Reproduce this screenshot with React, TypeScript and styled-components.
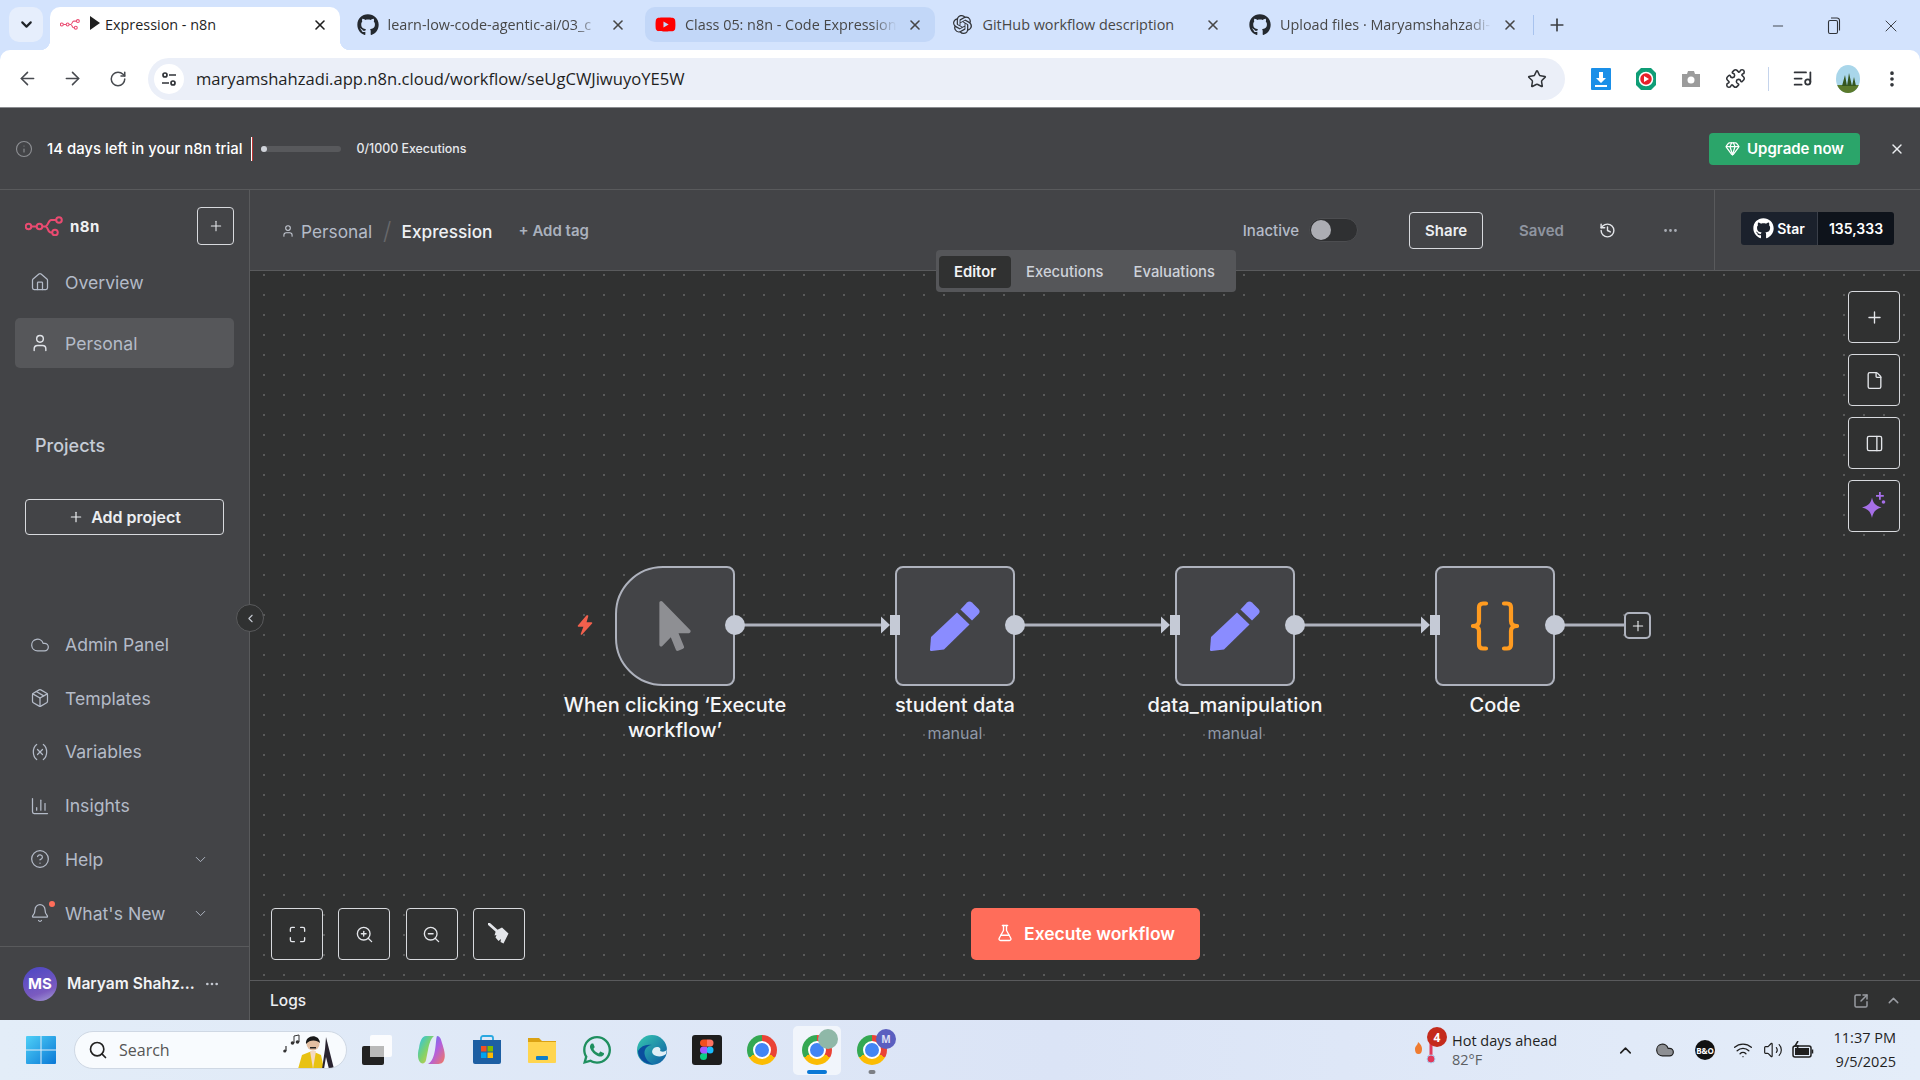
import styled, { createGlobalStyle } from 'styled-components';
import {
  ArrowLeft, ArrowRight, Bell, ChartColumn, ChevronDown, ChevronLeft, ChevronUp, CircleHelp, Cloud, Ellipsis,
  EllipsisVertical, File, FlaskConical, Gem, History, House, Info, ListMusic, Maximize, Minus, Package, PanelRight, Plus,
  Puzzle, RotateCw, Search, Star, SquareArrowOutUpRight, User, Variable, Volume2, Wifi, X, ZoomIn, ZoomOut,
} from 'lucide-react';
import { FaGithub, FaMousePointer, FaWhatsapp, FaYoutube } from 'react-icons/fa';
import { SiOpenai } from 'react-icons/si';

const GlobalStyle = createGlobalStyle`
    html, body {
        margin: 0;
        padding: 0;
        height: 100%;
        overflow: hidden;
        background: #434447;
        font-family: Inter, "Liberation Sans", sans-serif;
    }
    * {
        box-sizing: border-box;
    }
`;

const Screen = styled.div`
    width: 1920px;
    height: 1080px;
    display: flex;
    flex-direction: column;
    overflow: hidden;
`;

/* browser chrome */

const TabStrip = styled.div`
    height: 50px;
    flex: none;
    background: #d3e3fd;
    display: flex;
    align-items: flex-start;
    padding: 7px 0 0 9px;
    font-family: "Open Sans", sans-serif;
    position: relative;
`;

const TabMenu = styled.div`
    width: 34px;
    height: 35px;
    border-radius: 10px;
    background: #e6eefc;
    display: flex;
    align-items: center;
    justify-content: center;
    margin-right: 7px;
    color: #1f2328;
`;

const Tab = styled.div<{ $active?: boolean; $tinted?: boolean; $divider?: boolean }>`
    width: 290px;
    height: ${(p) => (p.$active ? '43px' : '35px')};
    margin-right: 7.5px;
    padding: 0 12px 0 8px;
    border-radius: 10px ${(p) => (p.$active ? '10px 0 0' : '10px 10px 10px')};
    background: ${(p) => (p.$active ? '#fff' : p.$tinted ? '#c2d7f8' : 'transparent')};
    display: flex;
    align-items: center;
    position: relative;
    color: ${(p) => (p.$active ? '#1f1f1f' : '#474747')};

    ${(p) =>
      p.$active &&
      `
        padding-bottom: 8px;
        &::before, &::after {
            content: '';
            position: absolute;
            bottom: 0;
            width: 10px;
            height: 10px;
        }
        &::before {
            left: -10px;
            background: radial-gradient(circle at 0 0, transparent 10px, #fff 10.5px);
        }
        &::after {
            right: -10px;
            background: radial-gradient(circle at 100% 0, transparent 10px, #fff 10.5px);
        }
    `}

    ${(p) =>
      p.$divider &&
      `
        &::after {
            content: '';
            position: absolute;
            right: -4px;
            top: 8px;
            width: 1px;
            height: 20px;
            background: #a8c3ee;
        }
    `}
`;

const TabIcon = styled.span`
    width: 24px;
    height: 24px;
    flex: none;
    display: flex;
    align-items: center;
    justify-content: center;
    margin-right: 8px;
`;

const TabTitle = styled.span<{ $faded?: boolean }>`
    flex: ${(p) => (p.$faded ? 'none' : '1')};
    width: ${(p) => (p.$faded ? '212px' : 'auto')};
    margin-right: auto;
    font-size: 14.4px;
    white-space: nowrap;
    ${(p) => p.$faded && 'mask-image: linear-gradient(90deg, #000 88%, transparent);'}
`;

const PlayMark = styled.span`
    display: inline-block;
    width: 0;
    height: 0;
    border-left: 10px solid #1f1f1f;
    border-top: 7px solid transparent;
    border-bottom: 7px solid transparent;
    margin-right: 5px;
`;

const NewTab = styled.div`
    width: 30px;
    height: 35px;
    color: #3c3f43;
    display: flex;
    align-items: center;
    justify-content: center;
    margin-left: 4px;
`;

const WindowButtons = styled.div`
    position: absolute;
    right: 1px;
    top: 8px;
    height: 35px;
    display: flex;
    color: #303338;
`;

const WindowButton = styled.div`
    width: 56.500px;
    display: flex;
    align-items: center;
    justify-content: center;
`;

const Toolbar = styled.div`
    height: 58px;
    flex: none;
    background: #d3e3fd;
    border-bottom: 1px solid #8a8c90;
`;

const ToolbarInner = styled.div`
    height: 57px;
    background: #fff;
    border-radius: 10px 10px 0 0;
    display: flex;
    align-items: center;
    padding-left: 4px;
    font-family: "Open Sans", sans-serif;
`;

const NavButton = styled.div<{ $w?: number }>`
    width: ${(p) => p.$w ?? 45}px;
    height: 34px;
    flex: none;
    display: flex;
    align-items: center;
    justify-content: center;
    color: #474a4f;
`;

const UrlBar = styled.div`
    width: 1417px;
    height: 42px;
    margin: 0 13px 0 7px;
    border-radius: 21px;
    background: #ebeff8;
    display: flex;
    align-items: center;
    padding: 0 18px 0 6px;
    color: #1f1f1f;
    font-size: 16.6px;
`;

const SiteInfo = styled.div`
    width: 30px;
    height: 30px;
    border-radius: 50%;
    background: #fff;
    margin-right: 12px;
    display: flex;
    align-items: center;
    justify-content: center;
`;

const UrlText = styled.span`
    flex: 1;
`;

const ToolbarDivider = styled.div`
    width: 1px;
    height: 24px;
    background: #c5d4ec;
    margin: 0 10px;
`;

/* trial banner */

const Banner = styled.div`
    height: 82px;
    flex: none;
    background: #434447;
    border-bottom: 1px solid #595a5c;
    display: flex;
    align-items: center;
    padding: 0 15px 0 15px;
    color: #fff;
`;

const BannerText = styled.span`
    font-size: 14.9px;
    font-weight: 500;
    margin-left: 14px;
`;

const BannerDivider = styled.div`
    width: 2px;
    height: 24px;
    margin: 0 8px 0 9px;
    background: linear-gradient(90deg, #fff 50%, #b33 50%);
`;

const ProgressTrack = styled.div`
    width: 80px;
    height: 6px;
    border-radius: 3px;
    background: #58595c;
    margin-right: 15px;
`;

const ProgressDot = styled.div`
    width: 6px;
    height: 6px;
    border-radius: 50%;
    background: #d0d3da;
`;

const ExecutionCount = styled.span`
    font-size: 12.4px;
    font-weight: 500;
    color: #e6e8ec;
    flex: 1;
`;

const UpgradeButton = styled.div`
    width: 151px;
    height: 32px;
    border-radius: 4px;
    background: #2ba56a;
    color: #fff;
    display: flex;
    align-items: center;
    justify-content: center;
    gap: 7px;
    font-size: 15px;
    font-weight: 600;
    margin-right: 29px;
`;

/* app */

const Main = styled.div`
    flex: 1;
    min-height: 0;
    display: flex;
`;

const Sidebar = styled.aside`
    width: 250px;
    flex: none;
    background: #434447;
    border-right: 1px solid #595a5c;
    display: flex;
    flex-direction: column;
    position: relative;
    z-index: 3;
`;

const BrandRow = styled.div`
    height: 67px;
    padding: 5px 15px 0 25px;
    display: flex;
    align-items: center;
    color: #f0f1f3;
    font-weight: 700;
    font-size: 15px;
    letter-spacing: 0.5px;
`;

const BrandName = styled.span`
    margin-left: 7px;
    flex: 1;
`;

const SquareButton = styled.div`
    width: 37px;
    height: 38px;
    border: 1px solid #d8dade;
    border-radius: 4px;
    display: flex;
    align-items: center;
    justify-content: center;
    color: #e6e8ec;
`;

const NavList = styled.nav<{ $gap: number }>`
    display: flex;
    flex-direction: column;
    gap: ${(p) => p.$gap}px;
`;

const NavItem = styled.div<{ $active?: boolean }>`
    height: 50px;
    width: 219px;
    margin-left: 15px;
    padding: 0 25px 0 15px;
    border-radius: 5px;
    background: ${(p) => (p.$active ? '#56575a' : 'transparent')};
    display: flex;
    align-items: center;
    gap: 15px;
    font-size: 17.6px;
    color: #b4bbc8;
    position: relative;
`;

const NavLabel = styled.span`
    flex: 1;
`;

const NotificationDot = styled.span`
    position: absolute;
    left: 34px;
    top: 13px;
    width: 6px;
    height: 6px;
    border-radius: 50%;
    background: #ff6d5a;
`;

const ProjectsTitle = styled.div`
    margin: 66px 0 0 35px;
    height: 24px;
    line-height: 24px;
    font-size: 18px;
    font-weight: 500;
    color: #c6ccd6;
`;

const AddProject = styled.div`
    margin: 41px 0 0 25px;
    width: 199px;
    height: 36px;
    border: 1px solid #d8dade;
    border-radius: 4px;
    display: flex;
    align-items: center;
    justify-content: center;
    gap: 7px;
    color: #eceef1;
    font-size: 16px;
    font-weight: 600;
`;

const SidebarBottom = styled.div`
    margin-top: auto;
`;

const UserRow = styled.div`
    height: 74px;
    margin-top: 8px;
    border-top: 1px solid #595a5c;
    padding: 0 29px 0 23px;
    display: flex;
    align-items: center;
    color: #f2f3f5;
    font-size: 15.6px;
    font-weight: 600;
`;

const Avatar = styled.div`
    width: 34px;
    height: 34px;
    border-radius: 50%;
    flex: none;
    background: linear-gradient(160deg, #4a46c4, #7b5bc0 70%, #a7a0d8);
    color: #fff;
    display: flex;
    align-items: center;
    justify-content: center;
    font-size: 15px;
    font-weight: 700;
    margin-right: 10px;
`;

const UserName = styled.span`
    flex: 1;
    white-space: nowrap;
`;

const CollapseButton = styled.div`
    position: absolute;
    right: -15px;
    top: 414px;
    width: 28px;
    height: 28px;
    border-radius: 50%;
    background: #303131;
    border: 1px solid #595a5c;
    display: flex;
    align-items: center;
    justify-content: center;
    color: #c4c8d0;
`;

const Content = styled.div`
    flex: 1;
    min-width: 0;
    display: flex;
    flex-direction: column;
`;

const Header = styled.header`
    height: 81px;
    flex: none;
    background: #434447;
    border-bottom: 1px solid #595a5c;
    display: flex;
`;

const Breadcrumbs = styled.div`
    flex: 1;
    display: flex;
    align-items: center;
    padding: 0 0 0 31px;
`;

const CrumbIcon = styled.span`
    display: flex;
    color: #c4c9d3;
    margin: 2px 6px 0 0;
`;

const Crumb = styled.span<{ $current?: boolean }>`
    font-size: 17.300px;
    margin-top: 2px;
    font-weight: ${(p) => (p.$current ? 500 : 400)};
    color: ${(p) => (p.$current ? '#eef0f3' : '#b4bbc8')};
`;

const CrumbSlash = styled.span`
    font-size: 24px;
    font-weight: 300;
    color: #67686b;
    margin: 0 10px 0 11px;
`;

const AddTag = styled.span`
    font-size: 15px;
    font-weight: 600;
    color: #aab1bd;
    margin-left: 26px;
    flex: 1;
`;

const InactiveLabel = styled.span`
    font-size: 15px;
    font-weight: 500;
    color: #b4bbc8;
    margin-right: 10px;
`;

const Toggle = styled.div`
    width: 49px;
    height: 24px;
    border-radius: 12px;
    background: #2f3032;
    border: 1px solid #4c4d50;
    padding: 1px;
    margin-right: 51px;
`;

const ToggleKnob = styled.div`
    width: 20px;
    height: 20px;
    border-radius: 50%;
    background: #acadb3;
`;

const ShareButton = styled.div`
    width: 74px;
    height: 37px;
    border: 1px solid #d8dade;
    border-radius: 4px;
    color: #eceef1;
    font-size: 15px;
    font-weight: 600;
    display: flex;
    align-items: center;
    justify-content: center;
    margin-right: 36px;
`;

const SavedLabel = styled.span`
    font-size: 15px;
    font-weight: 600;
    color: #8f95a0;
    margin-right: 35px;
`;

const HeaderIcon = styled.span<{ $right: number; $color: string }>`
    display: flex;
    color: ${(p) => p.$color};
    margin-right: ${(p) => p.$right}px;
`;

const GithubCell = styled.div`
    width: 206px;
    flex: none;
    border-left: 1px solid #595a5c;
    padding: 22px 0 0 26px;
`;

const GithubBadge = styled.div`
    width: 153px;
    height: 33px;
    display: flex;
    border-radius: 3px;
    overflow: hidden;
    color: #fff;
    font-size: 14px;
    font-weight: 600;
`;

const GithubStar = styled.div`
    width: 77px;
    background: #1b212c;
    border-right: 1px solid #3a3f49;
    display: flex;
    align-items: center;
    justify-content: center;
    gap: 3px;
`;

const GithubCount = styled.div`
    flex: 1;
    background: #0e131b;
    display: flex;
    align-items: center;
    justify-content: center;
`;

const Canvas = styled.main`
    flex: 1;
    min-height: 0;
    position: relative;
    background-color: #303131;
    background-image: radial-gradient(circle at 1px 1px, #686969 0.6px, transparent 1px);
    background-size: 20px 20px;
    background-position: 13px 3px;
`;

const ViewTabs = styled.div`
    position: absolute;
    left: 686px;
    top: -21px;
    width: 300px;
    height: 42px;
    background: #555659;
    border-radius: 4px;
    padding: 6px 3px 4px;
    display: flex;
    align-items: center;
    z-index: 2;
`;

const ViewTab = styled.div<{ $active?: boolean }>`
    height: 32px;
    padding: 0 15px;
    border-radius: 4px;
    background: ${(p) => (p.$active ? '#303131' : 'transparent')};
    color: ${(p) => (p.$active ? '#f2f3f5' : '#ced2d9')};
    font-size: 14.8px;
    font-weight: ${(p) => (p.$active ? 600 : 500)};
    display: flex;
    align-items: center;
`;

const SideTools = styled.div`
    position: absolute;
    right: 20px;
    top: 20px;
    display: flex;
    flex-direction: column;
    gap: 11px;
`;

const BottomTools = styled.div`
    position: absolute;
    left: 21px;
    bottom: 20px;
    display: flex;
    gap: 15.400px;
`;

const ToolButton = styled.div`
    width: 52px;
    height: 52px;
    border: 1px solid #d8dade;
    border-radius: 4px;
    background: #303131;
    color: #e4e6ea;
    display: flex;
    align-items: center;
    justify-content: center;
`;

const ExecuteButton = styled.div`
    position: absolute;
    left: 721px;
    bottom: 20px;
    width: 229px;
    height: 52px;
    padding-bottom: 2px;
    border-radius: 5px;
    background: #ff6d5a;
    color: #fff;
    font-size: 17.500px;
    font-weight: 600;
    display: flex;
    align-items: center;
    justify-content: center;
    gap: 10px;
`;

const EdgeLayer = styled.svg`
    position: absolute;
    left: 0;
    top: 0;
`;

const NodeSlot = styled.div<{ $center: number }>`
    position: absolute;
    top: 295px;
    left: ${(p) => p.$center - 150}px;
    width: 300px;
    display: flex;
    flex-direction: column;
    align-items: center;
`;

const NodeBox = styled.div<{ $trigger?: boolean }>`
    width: 120px;
    height: 120px;
    background: #434447;
    border: 2px solid #aeb2bd;
    border-radius: ${(p) => (p.$trigger ? '48px 8px 8px 48px' : '8px')};
    display: flex;
    align-items: center;
    justify-content: center;
`;

const NodeLabel = styled.div`
    margin-top: 7px;
    width: 240px;
    text-align: center;
    color: #f5f6f8;
    font-size: 20px;
    font-weight: 500;
    line-height: 25px;
`;

const NodeSub = styled.div`
    margin-top: 5px;
    font-size: 16px;
    line-height: 20px;
    color: #8f98a6;
`;

const TriggerBolt = styled.svg`
    position: absolute;
    left: 326px;
    top: 343px;
`;

const AddNode = styled.div`
    position: absolute;
    left: 1374px;
    top: 341px;
    width: 27px;
    height: 27px;
    border: 2px solid #aeb2bd;
    border-radius: 5px;
    background: #303131;
    color: #eceef1;
    display: flex;
    align-items: center;
    justify-content: center;
`;

const LogsBar = styled.div`
    height: 40px;
    flex: none;
    background: #303131;
    border-top: 1px solid #595a5c;
    display: flex;
    align-items: center;
    padding: 0 18px 0 20px;
    color: #eceef1;
    font-size: 15.500px;
    font-weight: 500;
    gap: 16px;
`;

const LogsTitle = styled.span`
    flex: 1;
`;

const LogsIcon = styled.span`
    display: flex;
    color: #9a9da3;
`;

/* windows taskbar */

const Taskbar = styled.footer`
    height: 60px;
    flex: none;
    background: linear-gradient(90deg, #e3edf8, #dbe4f6 55%, #e4edf9);
    display: flex;
    align-items: center;
    padding-left: 26px;
    font-family: "Open Sans", sans-serif;
    color: #1f1f1f;
`;

const SearchPill = styled.div`
    width: 273px;
    height: 38px;
    margin: 0 2px 0 18px;
    border-radius: 19px;
    background: #f8fbfe;
    border: 1px solid #cfd8e4;
    display: flex;
    align-items: center;
    padding: 0 8px 0 13px;
    font-size: 16px;
    color: #555;
    overflow: hidden;
`;

const SearchText = styled.span`
    flex: 1;
    margin-left: 11px;
`;

const TaskItem = styled.div<{ $active?: boolean; $mark?: string }>`
    width: ${(p) => (p.$active ? '48px' : '55px')};
    margin: 0 ${(p) => (p.$active ? '3.5px' : '0')};
    height: 49px;
    border-radius: 5px;
    background: ${(p) => (p.$active ? 'rgba(255,255,255,0.6)' : 'transparent')};
    display: flex;
    align-items: center;
    justify-content: center;
    position: relative;

    ${(p) =>
      p.$mark &&
      `
        &::after {
            content: '';
            position: absolute;
            left: 50%;
            bottom: 1px;
            transform: translateX(-50%);
            width: ${p.$active ? '20px' : '7px'};
            height: 4px;
            border-radius: 2px;
            background: ${p.$mark};
        }
    `}
`;

const ChromeGlyph = styled.div`
    width: 30px;
    height: 30px;
    border-radius: 50%;
    background: conic-gradient(#ea4335 0 120deg, #fbbc04 120deg 240deg, #34a853 240deg 360deg);
    display: flex;
    align-items: center;
    justify-content: center;

    &::after {
        content: '';
        width: 14px;
        height: 14px;
        border-radius: 50%;
        background: #4285f4;
        border: 2.5px solid #fff;
    }
`;

const ChromeBadge = styled.div<{ $bg: string }>`
    position: absolute;
    right: 3px;
    top: 3px;
    width: 20px;
    height: 20px;
    border-radius: 50%;
    background: ${(p) => p.$bg};
    color: #dfe0f5;
    font-size: 10px;
    font-weight: 700;
    display: flex;
    align-items: center;
    justify-content: center;
`;

const Weather = styled.div`
    margin-left: auto;
    width: 191px;
    display: flex;
    align-items: center;
    position: relative;
`;

const WeatherBadge = styled.span`
    position: absolute;
    left: 13px;
    top: -4px;
    width: 20px;
    height: 20px;
    border-radius: 50%;
    background: #c42b1c;
    color: #fff;
    font-size: 12px;
    font-weight: 700;
    display: flex;
    align-items: center;
    justify-content: center;
`;

const WeatherText = styled.div`
    font-size: 14.5px;
    line-height: 19px;
    margin-left: 12px;
`;

const WeatherSub = styled.div`
    color: #5c5f63;
`;

const TrayIcon = styled.span<{ $w: number }>`
    width: ${(p) => p.$w}px;
    display: flex;
    justify-content: center;
    color: #1f1f1f;
`;

const BoLogo = styled.span`
    width: 20px;
    height: 20px;
    border-radius: 50%;
    background: #111;
    color: #fff;
    font-size: 8px;
    font-weight: 700;
    display: flex;
    align-items: center;
    justify-content: center;
`;

const Clock = styled.div`
    width: 68px;
    margin: 0 24px 0 7px;
    text-align: right;
    font-size: 14.5px;
    line-height: 24px;
    white-space: nowrap;
    direction: rtl;
`;

function N8nLogo({ width = 38 }: { width?: number }) {
  return (
    <svg width={width} height={(width * 20) / 38} viewBox="0 0 38 20" fill="none" stroke="#ea4b71" strokeWidth="2">
      <circle cx="3.5" cy="10.5" r="2.8" />
      <circle cx="14.5" cy="10.5" r="2.8" />
      <circle cx="34" cy="4" r="2.8" />
      <circle cx="30" cy="16.5" r="2.8" />
      <path d="M6.3 10.5h5.4M17.3 10.5h3c3 0 2.6-6.5 6-6.5h5M20.3 10.5c3 0 2.2 6 5.5 6h1.4" />
    </svg>
  );
}

function PenIcon() {
  return (
    <svg width="50" height="50" viewBox="0 0 50 50" fill="#8a8cff">
      <path d="M30.500 8.500L37 1.500c1.500-1.500 3.500-1.500 5 0l6.500 6.500c1.500 1.500 1.500 3.500 0 5L42 19.500z" />
      <path d="M27 11.500L39.500 23.500 14 48.500 1.500 50c-1 0-1.500-.5-1.500-1.500l1-12.500z" />
    </svg>
  );
}

function CodeBraces() {
  return (
    <svg width="48" height="50" viewBox="0 0 48 50" fill="none" stroke="#ff9b20" strokeWidth="4.2" strokeLinecap="round" strokeLinejoin="round">
      <path d="M15 2.500h-3c-3 0-4 1.500-4 4v13.500c0 3-2 5-6 5 4 0 6 2 6 5v13.500c0 2.500 1 4 4 4h3" />
      <path d="M33 2.500h3c3 0 4 1.500 4 4v13.500c0 3 2 5 6 5-4 0-6 2-6 5v13.500c0 2.500-1 4-4 4h-3" />
    </svg>
  );
}

function Sparkle() {
  return (
    <svg width="24" height="28" viewBox="0 0 24 28" fill="#a66fe8">
      <path d="M10 5.500c1.200 6 3.500 8 9.500 10-6 1.800-8.300 4.500-9.500 10.500-1.200-6-3.500-8.700-10-10.500 6.500-2 8.800-4 10-10z" />
      <path d="M17 0h1.800v3h3v1.800h-3v3H17v-3h-3V3h3z" />
      <circle cx="21.500" cy="10" r="1.800" />
    </svg>
  );
}

function BroomGlyph() {
  return (
    <svg width="22" height="22" viewBox="0 0 22 22" fill="#e4e6ea">
      <path d="M1 1l8.500 7.500" stroke="#e4e6ea" strokeWidth="2.800" strokeLinecap="round" />
      <path d="M8 7.500l6-3 6.500 6-5 10-3-1.500.5-3-2.500 2-3-3.500 1-2.500-2 .5z" />
    </svg>
  );
}

function Edges() {
  const links = [
    { from: 735, to: 881 },
    { from: 1015, to: 1161 },
    { from: 1295, to: 1421 },
  ];
  const stroke = '#aeb2bd';
  const handle = '#c5cad6';
  return (
    <EdgeLayer width="1670" height="500" viewBox="250 271 1670 500">
      {links.map((l) => (
        <g key={l.from}>
          <line x1={l.from} y1="625" x2={l.to} y2="625" stroke={stroke} strokeWidth="3" />
          <path d={`M${l.to} 616.500 L${l.to + 9} 625 L${l.to} 633.500z`} fill={handle} />
          <rect x={l.to + 9} y="615" width="10" height="20" fill={handle} />
          <circle cx={l.from} cy="625" r="10" fill={handle} />
        </g>
      ))}
      <line x1="1555" y1="625" x2="1624" y2="625" stroke={stroke} strokeWidth="3" />
      <circle cx="1555" cy="625" r="10" fill={handle} />
    </EdgeLayer>
  );
}

function WindowsLogo() {
  return (
    <svg width="30" height="30" viewBox="0 0 30 30">
      <defs>
        <linearGradient id="winGrad" x1="0" y1="0" x2="1" y2="1">
          <stop offset="0" stopColor="#4fd0f7" />
          <stop offset="1" stopColor="#0a78d6" />
        </linearGradient>
      </defs>
      <path d="M1 1h13.500v13.500H0V2a1 1 0 0 1 1-1zM15.500 1H29a1 1 0 0 1 1 1v12.500H15.500zM0 15.500h14.500V29H1a1 1 0 0 1-1-1zM15.500 15.500H30V28a1 1 0 0 1-1 1H15.500z" fill="url(#winGrad)" />
    </svg>
  );
}

function SearchDoodle() {
  return (
    <svg width="58" height="38" viewBox="0 0 58 38">
      <path d="M18 38l4-14 10-4 9 4 3 14z" fill="#e8c213" />
      <path d="M30 20l3 18 3-18z" fill="#f3d9c4" />
      <circle cx="33" cy="13" r="6.500" fill="#e3bfa2" />
      <path d="M26 13c-1-9 13-11 14-1-3-3-10-4-14 1z" fill="#191919" />
      <path d="M30 16h6v1.500h-6z" fill="#222" />
      <path d="M46 6l3 12 5 20h-5l-3-12-2 12h-2l3-20z" fill="#2a2430" />
      <path d="M14 12v-7l5-1v7" stroke="#333" strokeWidth="1" fill="none" />
      <circle cx="12.500" cy="12" r="1.800" fill="#333" />
      <circle cx="17.500" cy="11" r="1.800" fill="#333" />
      <path d="M6 20v-5" stroke="#333" strokeWidth="1.200" />
      <circle cx="4.800" cy="20" r="1.600" fill="#333" />
    </svg>
  );
}

function TaskView() {
  return (
    <svg width="32" height="30" viewBox="0 0 32 30">
      <rect x="1" y="11" width="22" height="19" rx="2" fill="#222" />
      <rect x="9" y="0" width="22" height="22" rx="2" fill="#fff" fillOpacity="0.85" />
      <rect x="9" y="11" width="14" height="11" fill="#b9b9b9" />
    </svg>
  );
}

function Copilot() {
  return (
    <svg width="30" height="30" viewBox="0 0 30 30">
      <defs>
        <linearGradient id="copA" x1="0" y1="0" x2="1" y2="1">
          <stop offset="0" stopColor="#28c2f0" />
          <stop offset="0.5" stopColor="#7fd26a" />
          <stop offset="1" stopColor="#f4c53a" />
        </linearGradient>
        <linearGradient id="copB" x1="0" y1="0" x2="1" y2="1">
          <stop offset="0" stopColor="#3f7ff0" />
          <stop offset="0.5" stopColor="#b05ee0" />
          <stop offset="1" stopColor="#f57b5a" />
        </linearGradient>
      </defs>
      <path d="M9 1h8c-3 2-5 8-6 14l-2 10c-.5 3-3 4-5 3-3-2-4-8-2-15C3 6 5 1 9 1z" fill="url(#copA)" />
      <path d="M20 1c3 0 4 3 5 7 2 6 4 13 2 17-1 3-3 4-7 4h-9c4-2 6-8 7-14 1-5 1-12 2-14z" fill="url(#copB)" />
    </svg>
  );
}

function StoreIcon() {
  return (
    <svg width="30" height="30" viewBox="0 0 30 30">
      <path d="M9 5V3a2 2 0 0 1 2-2h8a2 2 0 0 1 2 2v2" stroke="#2aa8e0" strokeWidth="1.800" fill="none" />
      <path d="M1 5h28v22a2 2 0 0 1-2 2H3a2 2 0 0 1-2-2z" fill="#1d5fa3" />
      <rect x="9" y="11" width="5.500" height="5.500" fill="#f25022" />
      <rect x="15.500" y="11" width="5.500" height="5.500" fill="#7fba00" />
      <rect x="9" y="17.500" width="5.500" height="5.500" fill="#00a4ef" />
      <rect x="15.500" y="17.500" width="5.500" height="5.500" fill="#ffb900" />
    </svg>
  );
}

function FolderIcon() {
  return (
    <svg width="30" height="30" viewBox="0 0 30 30">
      <path d="M1 3h11l3 3h14v7H1z" fill="#dba213" />
      <path d="M1 7h28v20a1 1 0 0 1-1 1H2a1 1 0 0 1-1-1z" fill="#ffd54f" />
      <rect x="9" y="21" width="12" height="4" rx="1" fill="#0f7fc9" />
    </svg>
  );
}

function EdgeIcon() {
  return (
    <svg width="30" height="30" viewBox="0 0 30 30">
      <defs>
        <linearGradient id="edgeA" x1="0" y1="0" x2="1" y2="1">
          <stop offset="0" stopColor="#36c9b0" />
          <stop offset="1" stopColor="#0c59a4" />
        </linearGradient>
      </defs>
      <circle cx="15" cy="15" r="15" fill="url(#edgeA)" />
      <path d="M29 19c-3 3-9 3-12 1-4-3-1-8 3-8 3 0 4 2 3 4 5 2 7-1 7-3z" fill="#eaf4fb" fillOpacity="0.95" />
      <path d="M15 10c-5 0-9 5-7 11 1 3 3 6 7 8-8 0-14-6-14-13C4 11 9 9 15 10z" fill="#0a4f9e" />
    </svg>
  );
}

function FigmaIcon() {
  return (
    <svg width="30" height="30" viewBox="0 0 30 30">
      <rect width="30" height="30" rx="3" fill="#1e1e1e" />
      <circle cx="18" cy="15" r="3.500" fill="#1abcfe" />
      <path d="M11.500 22a3.500 3.500 0 0 1 0-7H15v3.500a3.500 3.500 0 0 1-3.500 3.500z" fill="#0acf83" transform="translate(0 3)" />
      <path d="M15 11.500h-3.500a3.500 3.500 0 0 0 0 7H15z" fill="#a259ff" />
      <path d="M15 4.500h-3.500a3.500 3.500 0 0 0 0 7H15z" fill="#f24e1e" />
      <path d="M15 4.500h3a3.500 3.500 0 0 1 0 7h-3z" fill="#ff7262" />
    </svg>
  );
}

function ProfilePicture() {
  return (
    <svg width="24" height="28" viewBox="0 0 24 28">
      <clipPath id="profileClip">
        <ellipse cx="12" cy="14" rx="12" ry="14" />
      </clipPath>
      <g clipPath="url(#profileClip)">
        <rect width="24" height="28" fill="#a9d6ea" />
        <rect y="20" width="24" height="8" fill="#5b7a2c" />
        <path d="M6 21l3-11 2 11zM11 21l2-13 3 13zM16 21l2-9 2 9z" fill="#35561f" />
      </g>
    </svg>
  );
}

function DownloadExt() {
  return (
    <svg width="20" height="22" viewBox="0 0 20 22">
      <rect width="20" height="22" rx="1" fill="#1a8fe8" />
      <path d="M8 4h4v6h3l-5 5-5-5h3zM4 17h12v2H4z" fill="#fff" />
    </svg>
  );
}

function YoutubeExt() {
  return (
    <svg width="20" height="22" viewBox="0 0 20 22">
      <path d="M5 0h10l5 5v12l-5 5H5l-5-5V5z" fill="#0f9d76" />
      <circle cx="10" cy="11" r="6.500" fill="#e8202a" stroke="#fff" strokeWidth="1.500" />
      <path d="M8 8l5 3-5 3z" fill="#fff" />
    </svg>
  );
}

function CameraExt() {
  return (
    <svg width="20" height="20" viewBox="0 0 20 20">
      <path d="M1 5h5l1-3h6l1 3h5v13H1z" fill="#9b9b9b" />
      <circle cx="10" cy="11" r="3.500" fill="#fff" />
    </svg>
  );
}

function RestoreIcon() {
  return (
    <svg width="16" height="18" viewBox="0 0 16 18" fill="none" stroke="#303338" strokeWidth="1.100">
      <rect x="2.500" y="3.500" width="9" height="13" rx="1.500" />
      <path d="M5 1h6a2.500 2.500 0 0 1 2.500 2.500v10" />
    </svg>
  );
}

function Thermometer() {
  return (
    <svg width="26" height="30" viewBox="0 0 26 30">
      <path d="M1 14c0-3 3-4 3-7 3 2 4 5 4 7 0 3-1 5-3.500 5S1 17 1 14z" fill="#ef7b30" />
      <rect x="15.500" y="8" width="3" height="14" fill="#e13a5b" />
      <circle cx="17" cy="24" r="4" fill="#e13a5b" stroke="#a9d3f2" strokeWidth="1" />
    </svg>
  );
}

function BatteryIcon() {
  return (
    <svg width="22" height="18" viewBox="0 0 22 18" fill="none" stroke="#1f1f1f" strokeWidth="1.500">
      <rect x="1" y="5" width="18" height="11" rx="2" />
      <rect x="3" y="7" width="14" height="7" fill="#1f1f1f" stroke="none" />
      <path d="M20.500 8.500v4" />
      <path d="M6 0L3 5h3l-1 4" stroke="#1f1f1f" />
    </svg>
  );
}

const tabs = [
  { title: 'learn-low-code-agentic-ai/03_c', icon: <FaGithub size={22} color="#24292f" />, faded: true },
  { title: 'Class 05: n8n - Code Expression', icon: <FaYoutube size={21} color="#f00" />, tinted: true, faded: true },
  { title: 'GitHub workflow description', icon: <SiOpenai size={19} color="#303338" /> },
  { title: 'Upload files · Maryamshahzadi-', icon: <FaGithub size={22} color="#24292f" />, divider: true, faded: true },
];

const lowerNav = [
  { label: 'Admin Panel', icon: <Cloud size={20} strokeWidth={1.5} /> },
  { label: 'Templates', icon: <Package size={20} strokeWidth={1.5} /> },
  { label: 'Variables', icon: <Variable size={20} strokeWidth={1.5} /> },
  { label: 'Insights', icon: <ChartColumn size={20} strokeWidth={1.5} /> },
  { label: 'Help', icon: <CircleHelp size={20} strokeWidth={1.5} />, more: true },
  { label: "What's New", icon: <Bell size={20} strokeWidth={1.5} />, more: true, dot: true },
];

export default function App() {
  return (
    <Screen>
      <GlobalStyle />

      <TabStrip>
        <TabMenu>
          <ChevronDown size={17} strokeWidth={3} />
        </TabMenu>
        <Tab $active>
          <TabIcon>
            <N8nLogo width={20} />
          </TabIcon>
          <TabTitle>
            <PlayMark />
            Expression - n8n
          </TabTitle>
          <X size={16} strokeWidth={2.4} />
        </Tab>
        {tabs.map((t) => (
          <Tab key={t.title} $tinted={t.tinted} $divider={t.divider}>
            <TabIcon>{t.icon}</TabIcon>
            <TabTitle $faded={t.faded}>{t.title}</TabTitle>
            <X size={16} strokeWidth={2.4} />
          </Tab>
        ))}
        <NewTab>
          <Plus size={20} />
        </NewTab>
        <WindowButtons>
          <WindowButton>
            <Minus size={16} strokeWidth={1.3} />
          </WindowButton>
          <WindowButton>
            <RestoreIcon />
          </WindowButton>
          <WindowButton>
            <X size={20} strokeWidth={1.1} />
          </WindowButton>
        </WindowButtons>
      </TabStrip>

      <Toolbar>
        <ToolbarInner>
          <NavButton $w={46}>
            <ArrowLeft size={21} strokeWidth={1.8} />
          </NavButton>
          <NavButton $w={45}>
            <ArrowRight size={21} strokeWidth={1.8} />
          </NavButton>
          <NavButton $w={46}>
            <RotateCw size={18} strokeWidth={2} />
          </NavButton>
          <UrlBar>
            <SiteInfo>
              <svg width="18" height="18" viewBox="0 0 18 18" fill="none" stroke="#303338" strokeWidth="1.700">
                <circle cx="5" cy="5" r="2" />
                <path d="M9 5h7M2 13h7" />
                <circle cx="13" cy="13" r="2" />
              </svg>
            </SiteInfo>
            <UrlText>maryamshahzadi.app.n8n.cloud/workflow/seUgCWJiwuyoYE5W</UrlText>
            <Star size={20} strokeWidth={1.8} color="#303338" />
          </UrlBar>
          <NavButton>
            <DownloadExt />
          </NavButton>
          <NavButton>
            <YoutubeExt />
          </NavButton>
          <NavButton>
            <CameraExt />
          </NavButton>
          <NavButton>
            <Puzzle size={21} strokeWidth={1.8} color="#303338" />
          </NavButton>
          <ToolbarDivider />
          <NavButton $w={46}>
            <ListMusic size={21} strokeWidth={2} color="#303338" />
          </NavButton>
          <NavButton $w={46}>
            <ProfilePicture />
          </NavButton>
          <NavButton $w={42}>
            <EllipsisVertical size={20} strokeWidth={2.4} color="#303338" />
          </NavButton>
        </ToolbarInner>
      </Toolbar>

      <Banner>
        <Info size={18} color="#8d8f93" strokeWidth={1.5} />
        <BannerText>14 days left in your n8n trial</BannerText>
        <BannerDivider />
        <ProgressTrack>
          <ProgressDot />
        </ProgressTrack>
        <ExecutionCount>0/1000 Executions</ExecutionCount>
        <UpgradeButton>
          <Gem size={15} />
          Upgrade now
        </UpgradeButton>
        <X size={16} color="#eceef1" />
      </Banner>

      <Main>
        <Sidebar>
          <BrandRow>
            <N8nLogo />
            <BrandName>n8n</BrandName>
            <SquareButton>
              <Plus size={16} strokeWidth={1.6} />
            </SquareButton>
          </BrandRow>
          <NavList $gap={11}>
            <NavItem>
              <House size={20} strokeWidth={1.5} />
              <NavLabel>Overview</NavLabel>
            </NavItem>
            <NavItem $active>
              <User size={20} strokeWidth={1.7} color="#e0e3e8" />
              <NavLabel>Personal</NavLabel>
            </NavItem>
          </NavList>
          <ProjectsTitle>Projects</ProjectsTitle>
          <AddProject>
            <Plus size={16} strokeWidth={1.8} />
            Add project
          </AddProject>
          <SidebarBottom>
            <NavList $gap={3.7}>
              {lowerNav.map((n) => (
                <NavItem key={n.label}>
                  {n.icon}
                  <NavLabel>{n.label}</NavLabel>
                  {n.more && <ChevronDown size={17} strokeWidth={1.3} />}
                  {n.dot && <NotificationDot />}
                </NavItem>
              ))}
            </NavList>
            <UserRow>
              <Avatar>MS</Avatar>
              <UserName>Maryam Shahz...</UserName>
              <Ellipsis size={16} color="#c4c8d0" />
            </UserRow>
          </SidebarBottom>
          <CollapseButton>
            <ChevronLeft size={13} />
          </CollapseButton>
        </Sidebar>

        <Content>
          <Header>
            <Breadcrumbs>
              <CrumbIcon>
                <User size={14} strokeWidth={1.8} />
              </CrumbIcon>
              <Crumb>Personal</Crumb>
              <CrumbSlash>/</CrumbSlash>
              <Crumb $current>Expression</Crumb>
              <AddTag>+ Add tag</AddTag>
              <InactiveLabel>Inactive</InactiveLabel>
              <Toggle>
                <ToggleKnob />
              </Toggle>
              <ShareButton>Share</ShareButton>
              <SavedLabel>Saved</SavedLabel>
              <HeaderIcon $right={46} $color="#e4e6ea">
                <History size={17} strokeWidth={2} />
              </HeaderIcon>
              <HeaderIcon $right={35} $color="#a9adb5">
                <Ellipsis size={17} />
              </HeaderIcon>
            </Breadcrumbs>
            <GithubCell>
              <GithubBadge>
                <GithubStar>
                  <FaGithub size={21} />
                  Star
                </GithubStar>
                <GithubCount>135,333</GithubCount>
              </GithubBadge>
            </GithubCell>
          </Header>

          <Canvas>
            <ViewTabs>
              <ViewTab $active>Editor</ViewTab>
              <ViewTab>Executions</ViewTab>
              <ViewTab>Evaluations</ViewTab>
            </ViewTabs>

            <TriggerBolt width="18" height="22" viewBox="0 0 18 22">
              <path d="M11 2L2.500 12h6l-3 8 10-11h-6l2-7z" fill="#f2604d" stroke="#f2604d" strokeWidth="1.600" strokeLinejoin="round" />
            </TriggerBolt>

            <NodeSlot $center={425}>
              <NodeBox $trigger>
                <FaMousePointer size={50} color="#8e8f93" />
              </NodeBox>
              <NodeLabel>When clicking ‘Execute workflow’</NodeLabel>
            </NodeSlot>
            <NodeSlot $center={705}>
              <NodeBox>
                <PenIcon />
              </NodeBox>
              <NodeLabel>student data</NodeLabel>
              <NodeSub>manual</NodeSub>
            </NodeSlot>
            <NodeSlot $center={985}>
              <NodeBox>
                <PenIcon />
              </NodeBox>
              <NodeLabel>data_manipulation</NodeLabel>
              <NodeSub>manual</NodeSub>
            </NodeSlot>
            <NodeSlot $center={1245}>
              <NodeBox>
                <CodeBraces />
              </NodeBox>
              <NodeLabel>Code</NodeLabel>
            </NodeSlot>

            <Edges />

            <AddNode>
              <Plus size={16} strokeWidth={1.6} />
            </AddNode>

            <SideTools>
              <ToolButton>
                <Plus size={19} strokeWidth={1.7} />
              </ToolButton>
              <ToolButton>
                <File size={19} strokeWidth={1.7} />
              </ToolButton>
              <ToolButton>
                <PanelRight size={19} strokeWidth={1.7} />
              </ToolButton>
              <ToolButton>
                <Sparkle />
              </ToolButton>
            </SideTools>

            <BottomTools>
              <ToolButton>
                <Maximize size={19} strokeWidth={1.7} />
              </ToolButton>
              <ToolButton>
                <ZoomIn size={19} strokeWidth={1.7} />
              </ToolButton>
              <ToolButton>
                <ZoomOut size={19} strokeWidth={1.7} />
              </ToolButton>
              <ToolButton>
                <BroomGlyph />
              </ToolButton>
            </BottomTools>

            <ExecuteButton>
              <FlaskConical size={18} strokeWidth={1.8} />
              Execute workflow
            </ExecuteButton>
          </Canvas>

          <LogsBar>
            <LogsTitle>Logs</LogsTitle>
            <LogsIcon>
              <SquareArrowOutUpRight size={16} strokeWidth={2.2} />
            </LogsIcon>
            <LogsIcon>
              <ChevronUp size={17} />
            </LogsIcon>
          </LogsBar>
        </Content>
      </Main>

      <Taskbar>
        <WindowsLogo />
        <SearchPill>
          <Search size={20} color="#222" strokeWidth={2} />
          <SearchText>Search</SearchText>
          <SearchDoodle />
        </SearchPill>
        <TaskItem>
          <TaskView />
        </TaskItem>
        <TaskItem>
          <Copilot />
        </TaskItem>
        <TaskItem>
          <StoreIcon />
        </TaskItem>
        <TaskItem>
          <FolderIcon />
        </TaskItem>
        <TaskItem>
          <FaWhatsapp size={32} color="#1f8f5f" />
        </TaskItem>
        <TaskItem>
          <EdgeIcon />
        </TaskItem>
        <TaskItem>
          <FigmaIcon />
        </TaskItem>
        <TaskItem>
          <ChromeGlyph />
        </TaskItem>
        <TaskItem $active $mark="#0a78d6">
          <ChromeGlyph />
          <ChromeBadge $bg="#8fb8a8" />
        </TaskItem>
        <TaskItem $mark="#7c7f85">
          <ChromeGlyph />
          <ChromeBadge $bg="#5b5fc0">M</ChromeBadge>
        </TaskItem>

        <Weather>
          <Thermometer />
          <WeatherBadge>4</WeatherBadge>
          <WeatherText>
            Hot days ahead
            <WeatherSub>82°F</WeatherSub>
          </WeatherText>
        </Weather>
        <TrayIcon $w={40}>
          <ChevronUp size={19} strokeWidth={2} />
        </TrayIcon>
        <TrayIcon $w={40}>
          <Cloud size={20} fill="#8d8f93" strokeWidth={1.4} />
        </TrayIcon>
        <TrayIcon $w={40}>
          <BoLogo>B&O</BoLogo>
        </TrayIcon>
        <TrayIcon $w={36}>
          <Wifi size={20} strokeWidth={1.6} />
        </TrayIcon>
        <TrayIcon $w={24}>
          <Volume2 size={20} strokeWidth={1.4} />
        </TrayIcon>
        <TrayIcon $w={36}>
          <BatteryIcon />
        </TrayIcon>
        <Clock>
          <bdi>11:37 PM</bdi>
          <br />
          <bdi>9/5/2025</bdi>
        </Clock>
      </Taskbar>
    </Screen>
  );
}
